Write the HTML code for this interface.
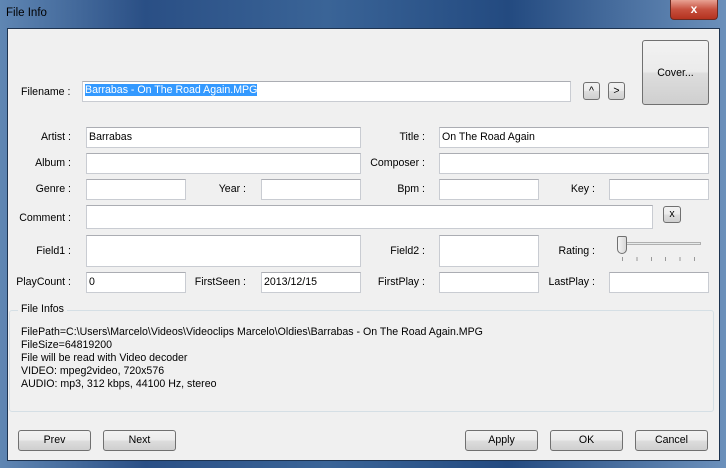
<!DOCTYPE html>
<html><head><style>
*{box-sizing:border-box;margin:0;padding:0}
body{width:726px;height:468px;overflow:hidden;background:linear-gradient(90deg,#5f86b3 0%,#2a4f85 20%,#3a6497 45%,#234a80 70%,#6b90bb 100%);font-family:"Liberation Sans",sans-serif;font-size:10.6px;color:#000;position:relative}
.a{position:absolute}
.client{left:7px;top:28px;width:713px;height:433px;background:#f0f0f0;border:1px solid #1d3350}
.in{position:absolute;background:#fff;border:1px solid #c9ccd2;border-top-color:#abadb3;height:21px;padding:3px 2px;white-space:nowrap}
.l{position:absolute;text-align:right;white-space:nowrap}
.btn{position:absolute;border:1px solid #707070;border-radius:3px;background:linear-gradient(#f2f2f2 0%,#ebebeb 48%,#dddddd 52%,#cfcfcf 100%);text-align:center;line-height:18px}
</style></head><body>
<div class="a" style="left:6px;top:7px;font-size:11.5px;color:#000">File Info</div>
<div class="a" style="left:670px;top:0;width:48px;height:20px;border:1px solid #6b2a22;border-top:none;border-radius:0 0 4px 4px;background:linear-gradient(#e8a294,#c7503e 50%,#b4321f);color:#fff;font-weight:bold;text-align:center;line-height:18px;font-size:12px">x</div>
<div class="a client"></div>

<div class="l" style="left:21px;top:86px">Filename :</div>
<div class="in" style="left:82px;top:81px;width:489px;padding:2px"><span style="background:#3399ff;color:#fff">Barrabas - On The Road Again.MPG</span></div>
<div class="btn" style="left:583px;top:82px;width:17px;height:18px;line-height:16px">^</div>
<div class="btn" style="left:608px;top:82px;width:17px;height:18px;line-height:16px">&gt;</div>
<div class="btn" style="left:642px;top:40px;width:67px;height:65px;line-height:64px">Cover...</div>

<div class="l" style="right:655px;top:131px">Artist :</div>
<div class="in" style="left:86px;top:127px;width:275px">Barrabas</div>
<div class="l" style="right:301px;top:131px">Title :</div>
<div class="in" style="left:439px;top:127px;width:270px">On The Road Again</div>

<div class="l" style="right:655px;top:157px">Album :</div>
<div class="in" style="left:86px;top:153px;width:275px"></div>
<div class="l" style="right:301px;top:157px">Composer :</div>
<div class="in" style="left:439px;top:153px;width:270px"></div>

<div class="l" style="right:655px;top:183px">Genre :</div>
<div class="in" style="left:86px;top:179px;width:100px"></div>
<div class="l" style="right:480px;top:183px">Year :</div>
<div class="in" style="left:261px;top:179px;width:100px"></div>
<div class="l" style="right:301px;top:183px">Bpm :</div>
<div class="in" style="left:439px;top:179px;width:100px"></div>
<div class="l" style="right:131px;top:183px">Key :</div>
<div class="in" style="left:609px;top:179px;width:100px"></div>

<div class="l" style="right:655px;top:212px">Comment :</div>
<div class="in" style="left:86px;top:205px;width:567px;height:24px"></div>
<div class="btn" style="left:663px;top:206px;width:18px;height:17px;line-height:15px">x</div>

<div class="l" style="right:655px;top:245px">Field1 :</div>
<div class="in" style="left:86px;top:235px;width:275px;height:32px"></div>
<div class="l" style="right:301px;top:245px">Field2 :</div>
<div class="in" style="left:439px;top:235px;width:100px;height:32px"></div>
<div class="l" style="right:131px;top:245px">Rating :</div>
<div class="a" style="left:624px;top:242px;width:77px;height:3px;border:1px solid #b0b0b0;background:#e7eaea"></div>
<div class="a" style="left:617px;top:236px;width:10px;height:18px;border:1px solid #707070;border-radius:2px 2px 5px 5px;background:linear-gradient(90deg,#f4f4f4,#d8d8d8)"></div>
<div class="a" style="left:622px;top:257px;width:80px;height:4px;background:repeating-linear-gradient(90deg,#999 0 1px,transparent 1px 14.4px)"></div>

<div class="l" style="right:655px;top:276px">PlayCount :</div>
<div class="in" style="left:86px;top:272px;width:100px">0</div>
<div class="l" style="right:480px;top:276px">FirstSeen :</div>
<div class="in" style="left:261px;top:272px;width:100px">2013/12/15</div>
<div class="l" style="right:301px;top:276px">FirstPlay :</div>
<div class="in" style="left:439px;top:272px;width:100px"></div>
<div class="l" style="right:131px;top:276px">LastPlay :</div>
<div class="in" style="left:609px;top:272px;width:100px"></div>

<div class="a" style="left:9px;top:310px;width:705px;height:102px;border:1px solid #d5dfe5;border-radius:3px"></div>
<div class="a" style="left:18px;top:303px;background:#f0f0f0;padding:0 3px">File Infos</div>
<div class="a" style="left:21px;top:326px;line-height:13px;white-space:pre">FilePath=C:\Users\Marcelo\Videos\Videoclips Marcelo\Oldies\Barrabas - On The Road Again.MPG
FileSize=64819200
File will be read with Video decoder
VIDEO: mpeg2video, 720x576
AUDIO: mp3, 312 kbps, 44100 Hz, stereo</div>

<div class="btn" style="left:18px;top:430px;width:73px;height:21px">Prev</div>
<div class="btn" style="left:103px;top:430px;width:73px;height:21px">Next</div>
<div class="btn" style="left:465px;top:430px;width:73px;height:21px">Apply</div>
<div class="btn" style="left:550px;top:430px;width:73px;height:21px">OK</div>
<div class="btn" style="left:635px;top:430px;width:73px;height:21px">Cancel</div>
</body></html>
